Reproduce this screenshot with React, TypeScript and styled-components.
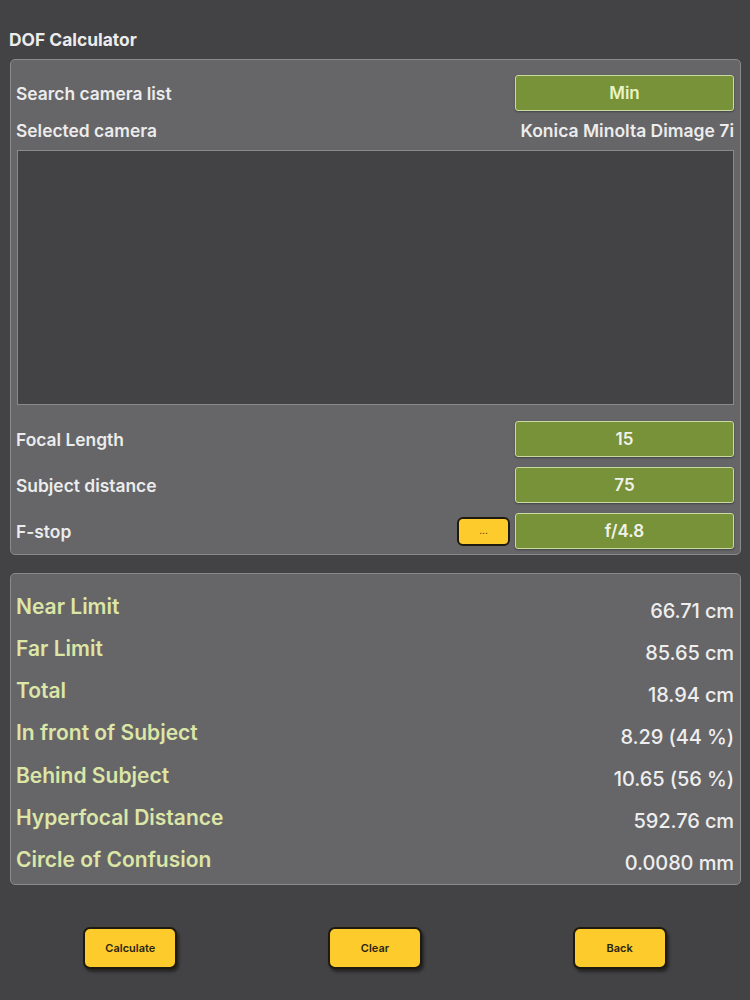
import React from 'react';
import styled, { createGlobalStyle } from 'styled-components';

const GlobalStyle = createGlobalStyle`
  html, body {
    margin: 0;
    padding: 0;
    background: #434244;
  }
  body {
    font-family: Inter, "Noto Sans", "Liberation Sans", sans-serif;
    -webkit-font-smoothing: antialiased;
  }
`;

const results = [
  { label: 'Near Limit', value: '66.71 cm' },
  { label: 'Far Limit', value: '85.65 cm' },
  { label: 'Total', value: '18.94 cm' },
  { label: 'In front of Subject', value: '8.29 (44 %)' },
  { label: 'Behind Subject', value: '10.65 (56 %)' },
  { label: 'Hyperfocal Distance', value: '592.76 cm' },
  { label: 'Circle of Confusion', value: '0.0080 mm' },
];

const App: React.FC = () => {
  return (
    <>
      <GlobalStyle />
      <Page>
        <Title>DOF Calculator</Title>
        <Panel>
          <InputRow>
            <Label>Search camera list</Label>
            <ValueButton accent>Min</ValueButton>
          </InputRow>
          <CameraRow>
            <Label>Selected camera</Label>
            <CameraName>Konica Minolta Dimage 7i</CameraName>
          </CameraRow>
          <CameraList />
          <Inputs>
            <InputRow>
              <Label>Focal Length</Label>
              <ValueButton>15</ValueButton>
            </InputRow>
            <InputRow>
              <Label>Subject distance</Label>
              <ValueButton>75</ValueButton>
            </InputRow>
            <InputRow>
              <Label>F-stop</Label>
              <RightGroup>
                <MoreButton>...</MoreButton>
                <ValueButton>f/4.8</ValueButton>
              </RightGroup>
            </InputRow>
          </Inputs>
        </Panel>
        <ResultPanel>
          {results.map((r) => (
            <ResultRow key={r.label}>
              <ResultLabel>{r.label}</ResultLabel>
              <ResultValue>{r.value}</ResultValue>
            </ResultRow>
          ))}
        </ResultPanel>
        <Footer>
          <ActionCell>
            <ActionButton>Calculate</ActionButton>
          </ActionCell>
          <ActionCell>
            <ActionButton>Clear</ActionButton>
          </ActionCell>
          <ActionCell>
            <ActionButton>Back</ActionButton>
          </ActionCell>
        </Footer>
      </Page>
    </>
  );
};

export default App;

const Page = styled.div`
  display: flex;
  flex-direction: column;
  width: 750px;
  min-height: 1000px;
  box-sizing: border-box;
  padding: 30px 9px 0 10px;
  background: #434244;
`;

const Title = styled.h1`
  margin: 0 0 0 -1px;
  height: 20px;
  line-height: 20px;
  font-size: 17.4px;
  font-weight: 700;
  color: #ececec;
`;

const Panel = styled.div`
  margin-top: 9px;
  display: flex;
  flex-direction: column;
  padding: 15px 6px 5px 5px;
  background: #666568;
  border: 1px solid #8a898c;
  border-radius: 5px;
`;

const InputRow = styled.div`
  display: flex;
  align-items: center;
  justify-content: space-between;
  height: 36px;
`;

const Label = styled.span`
  font-size: 17.4px;
  font-weight: 600;
  color: #ececec;
`;

const ValueButton = styled.div<{ accent?: boolean }>`
  display: flex;
  align-items: center;
  justify-content: center;
  box-sizing: border-box;
  width: 219px;
  height: 36px;
  background: #78923a;
  border: 1.5px solid #cadb9f;
  border-radius: 3px;
  box-shadow: 0 1px 2px rgba(0, 0, 0, 0.35);
  font-size: 17px;
  font-weight: 600;
  color: ${({ accent }) => (accent ? '#e9f4c3' : '#f2f2ea')};
`;

const CameraRow = styled.div`
  display: flex;
  align-items: center;
  justify-content: space-between;
  margin-top: 8px;
  height: 22px;
`;

const CameraName = styled.span`
  font-size: 17.5px;
  font-weight: 600;
  color: #ececec;
`;

const CameraList = styled.div`
  margin: 9px 0 0 1px;
  height: 253px;
  background: #434244;
  border: 1px solid #8a898c;
`;

const Inputs = styled.div`
  display: flex;
  flex-direction: column;
  gap: 10px;
  margin-top: 16px;
`;

const RightGroup = styled.div`
  display: flex;
  align-items: center;
  gap: 5px;
`;

const MoreButton = styled.div`
  display: flex;
  align-items: center;
  justify-content: center;
  box-sizing: border-box;
  width: 53px;
  height: 29px;
  padding-bottom: 2px;
  background: #fdcb2b;
  border: 2px solid #1e1a10;
  border-radius: 6px;
  font-size: 10px;
  color: #3a3010;
`;

const ResultPanel = styled.div`
  margin-top: 18px;
  display: flex;
  flex-direction: column;
  padding: 15px 6px 0 5px;
  height: 295px;
  background: #666568;
  border: 1px solid #8a898c;
  border-radius: 5px;
`;

const ResultRow = styled.div`
  display: flex;
  align-items: center;
  justify-content: space-between;
  height: 42.9px;
`;

const ResultLabel = styled.span`
  margin-top: -7px;
  font-size: 21px;
  font-weight: 600;
  color: #dce6a6;
`;

const ResultValue = styled.span`
  margin-top: 1px;
  font-size: 20px;
  font-weight: 500;
  color: #eeeeee;
  letter-spacing: -0.1px;
`;

const Footer = styled.div`
  display: grid;
  grid-template-columns: repeat(3, 1fr);
  margin: 42px -1px 0 -2px;
`;

const ActionCell = styled.div`
  display: flex;
  justify-content: center;
`;

const ActionButton = styled.button`
  box-sizing: border-box;
  width: 94px;
  height: 42px;
  background: #fdcb2b;
  border: 2px solid #1e1a10;
  border-radius: 7px;
  box-shadow: 2px 3px 3px rgba(0, 0, 0, 0.45);
  font-family: Inter, "Liberation Sans", sans-serif;
  font-size: 11px;
  font-weight: 600;
  color: #2a2414;
  cursor: pointer;
`;
